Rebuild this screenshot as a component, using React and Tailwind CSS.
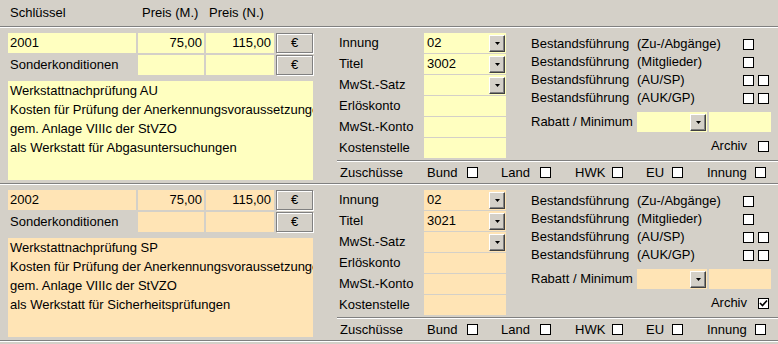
import React from "react";

const Sep = ({ className = "" }) => (
  <div className={`h-[2px] border-t border-b border-t-[#808080] border-b-white ${className}`} />
);

function Check({ checked }) {
  return (
    <span className="w-[11px] h-[11px] border border-black bg-white flex items-center justify-center shrink-0">
      {checked && (
        <svg width="9" height="9" viewBox="0 0 9 9">
          <path d="M1 4 L3.5 6.5 L8 1.5" stroke="black" strokeWidth="1.6" fill="none" />
        </svg>
      )}
    </span>
  );
}

function DropBtn() {
  return (
    <span className="w-[16px] h-[17px] bg-[#d4d0c8] border border-t-white border-l-white border-r-[#404040] border-b-[#404040] shadow-[inset_-1px_-1px_0_#808080] flex items-center justify-center shrink-0">
      <svg width="5" height="3" viewBox="0 0 5 3">
        <path d="M0 0 H5 L2.5 3 Z" fill="black" />
      </svg>
    </span>
  );
}

function EuroBtn() {
  return (
    <div className="w-[37px] h-[20px] border border-[#808080] shadow-[inset_1px_1px_0_#fff,1px_1px_0_#fff] flex items-center justify-center">
      €
    </div>
  );
}

const middleRows = [
  { label: "Innung", drop: true, key: "innung" },
  { label: "Titel", drop: true, key: "titel" },
  { label: "MwSt.-Satz", drop: true, key: "mwst" },
  { label: "Erlöskonto" },
  { label: "MwSt.-Konto" },
  { label: "Kostenstelle" },
];

const bestand = [
  { label: "(Zu-/Abgänge)", boxes: 1 },
  { label: "(Mitglieder)", boxes: 1 },
  { label: "(AU/SP)", boxes: 2 },
  { label: "(AUK/GP)", boxes: 2 },
];

function Record({ bg, data }) {
  return (
    <div>
      <div className="flex h-[155px]">
        {/* linke Spalte */}
        <div className="w-[337px] pl-[8px] pt-[5px] shrink-0">
          <div className="flex gap-[2px] h-[20px]">
            <div className={`w-[128px] ${bg} pl-[2px] leading-[20px]`}>{data.key}</div>
            <div className={`w-[66px] ${bg} text-right pr-[2px] leading-[20px]`}>75,00</div>
            <div className={`w-[68px] ${bg} text-right pr-[3px] leading-[20px]`}>115,00</div>
            <EuroBtn />
          </div>
          <div className="flex gap-[2px] h-[20px] mt-[2px]">
            <div className="w-[128px] pl-[2px] leading-[20px]">Sonderkonditionen</div>
            <div className={`w-[66px] ${bg}`} />
            <div className={`w-[68px] ${bg}`} />
            <EuroBtn />
          </div>
          <div className={`w-[305px] h-[99px] mt-[6px] ${bg} pl-[2px] leading-[19px] overflow-hidden whitespace-nowrap`}>
            {data.lines.map((l, i) => (
              <div key={i}>{l}</div>
            ))}
          </div>
        </div>

        <div className="flex-1 flex flex-col">
          <div className="flex h-[132px]">
            {/* mittlere Spalte */}
            <div className="w-[194px] pt-[5px] shrink-0">
              {middleRows.map((r, i) => (
                <div key={i} className="flex h-[20px] mb-[1px]">
                  <div className="w-[87px] pl-[2px] leading-[20px]">{r.label}</div>
                  <div className={`w-[82px] ${bg} flex items-center justify-between pl-[3px] pr-[1px]`}>
                    <span>{r.key ? data[r.key] : ""}</span>
                    {r.drop && <DropBtn />}
                  </div>
                </div>
              ))}
            </div>

            {/* rechte Spalte */}
            <div className="flex-1 pt-[7px]">
              {bestand.map((b, i) => (
                <div key={i} className="flex h-[18px] items-center">
                  <span className="w-[106px]">Bestandsführung</span>
                  <span className="w-[106px]">{b.label}</span>
                  <div className="flex gap-[4px]">
                    <Check />
                    {b.boxes === 2 && <Check />}
                  </div>
                </div>
              ))}
              <div className="flex h-[20px] mt-[5px]">
                <span className="w-[106px] leading-[20px]">Rabatt / Minimum</span>
                <div className={`w-[70px] ${bg} flex items-center justify-end pr-[1px]`}>
                  <DropBtn />
                </div>
                <div className={`w-[62px] ml-[2px] ${bg}`} />
              </div>
              <div className="flex h-[18px] mt-[5px] items-center justify-end pr-[9px]">
                <span className="mr-[11px]">Archiv</span>
                <Check checked={data.archiv} />
              </div>
            </div>
          </div>
          <Sep />
          <div className="h-[21px] flex items-center">
            <span className="w-[90px] pl-[3px]">Zuschüsse</span>
            <span className="w-[40px]">Bund</span>
            <Check />
            <span className="w-[39px] ml-[23px]">Land</span>
            <Check />
            <span className="w-[37px] ml-[24px]">HWK</span>
            <Check />
            <span className="w-[26px] ml-[23px]">EU</span>
            <Check />
            <span className="w-[48px] ml-[24px]">Innung</span>
            <Check />
          </div>
        </div>
      </div>
      <Sep />
    </div>
  );
}

const records = [
  {
    bg: "bg-[#ffffc0]",
    key: "2001",
    innung: "02",
    titel: "3002",
    mwst: "",
    archiv: false,
    lines: [
      "Werkstattnachprüfung AU",
      "Kosten für Prüfung der Anerkennungsvoraussetzungen",
      "gem. Anlage VIIIc der StVZO",
      "als Werkstatt für Abgasuntersuchungen",
    ],
  },
  {
    bg: "bg-[#ffe4b5]",
    key: "2002",
    innung: "02",
    titel: "3021",
    mwst: "",
    archiv: true,
    lines: [
      "Werkstattnachprüfung SP",
      "Kosten für Prüfung der Anerkennungsvoraussetzungen",
      "gem. Anlage VIIIc der StVZO",
      "als Werkstatt für Sicherheitsprüfungen",
    ],
  },
];

export default function App() {
  return (
    <div className="w-[778px] h-[344px] overflow-hidden bg-[#d4d0c8] text-black text-[13px] font-['Liberation_Sans',Arial,sans-serif]">
      <div className="h-[26px] flex items-center">
        <span className="w-[142px] pl-[10px]">Schlüssel</span>
        <span className="w-[67px]">Preis (M.)</span>
        <span>Preis (N.)</span>
      </div>
      <Sep />
      {records.map((r, i) => (
        <Record key={i} bg={r.bg} data={r} />
      ))}
    </div>
  );
}
